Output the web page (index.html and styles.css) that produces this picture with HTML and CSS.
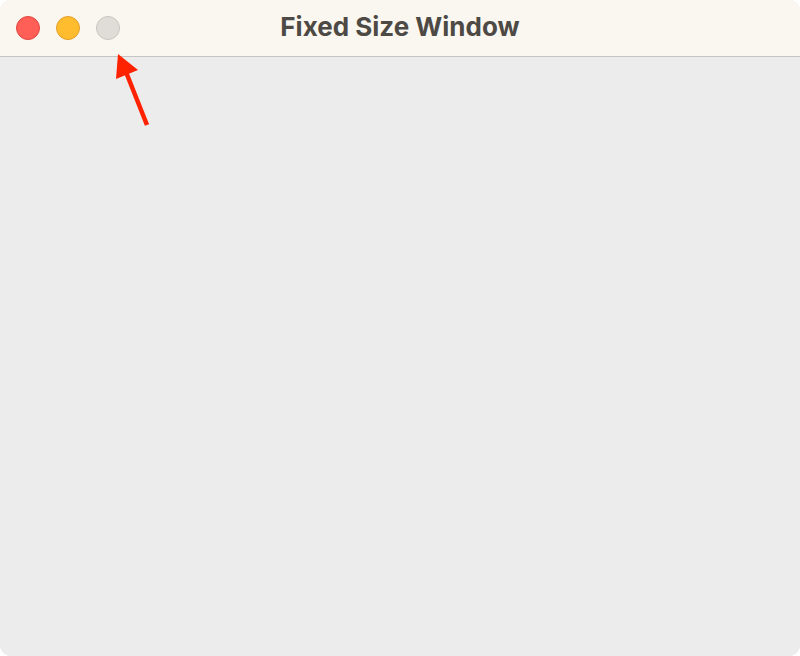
FILE: index.html
```html
<!DOCTYPE html>
<html>
<head>
<meta charset="utf-8">
<link rel="stylesheet" href="styles.css">
</head>
<body>
<div class="window">
  <div class="titlebar">
    <div class="lights">
      <span class="light close"></span>
      <span class="light min"></span>
      <span class="light zoom"></span>
    </div>
    <div class="title">Fixed Size Window</div>
  </div>
  <div class="content"></div>
  <svg class="arrow" width="60" height="90" viewBox="100 45 60 90">
    <line x1="147" y1="125" x2="126" y2="72" stroke="#ff2200" stroke-width="4.5" stroke-linecap="butt"/>
    <polygon points="118,54 116,79 138,70" fill="#ff2200"/>
  </svg>
</div>
</body>
</html>
```
FILE: styles.css
```css
html, body {
  margin: 0;
  padding: 0;
  background: #ffffff;
}
.window {
  position: relative;
  width: 800px;
  height: 656px;
  border-radius: 11px;
  overflow: hidden;
  display: flex;
  flex-direction: column;
  background: #ececec;
}
.titlebar {
  height: 57px;
  box-sizing: border-box;
  border-bottom: 1px solid #c6c4c2;
  background: #faf6f0;
  display: flex;
  align-items: center;
  position: relative;
}
.lights {
  display: flex;
  gap: 16px;
  padding-left: 16px;
  margin-top: -1px;
}
.light {
  width: 24px;
  height: 24px;
  border-radius: 50%;
  box-sizing: border-box;
}
.close { background: #ff5f57; border: 1px solid #e2463f; }
.min { background: #febc2e; border: 1px solid #e1a126; }
.zoom { background: #e0ddd8; border: 1px solid #c9c5bf; }
.title {
  position: absolute;
  left: 0;
  right: 0;
  top: 0;
  height: 56px;
  line-height: 54px;
  text-align: center;
  font-family: Inter, "Liberation Sans", sans-serif;
  font-weight: 700;
  font-size: 26px;
  color: #4d4944;
  pointer-events: none;
}
.content {
  flex: 1;
}
.arrow {
  position: absolute;
  left: 100px;
  top: 45px;
}
```
